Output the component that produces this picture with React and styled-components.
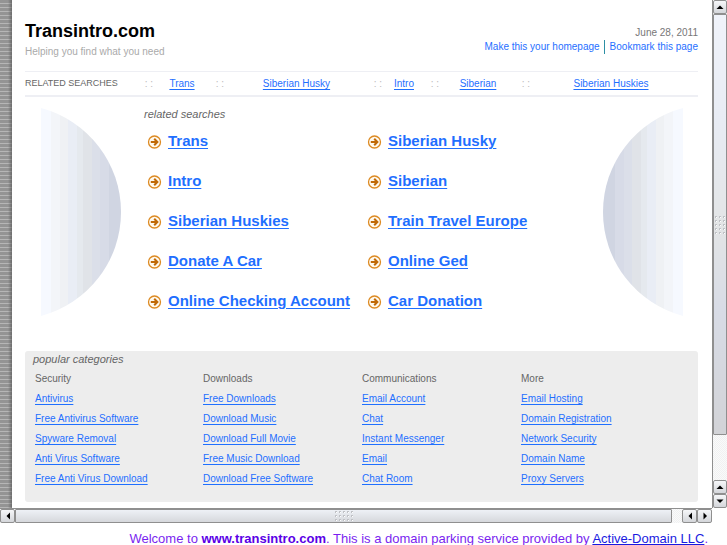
import React from 'react';
import styled, { createGlobalStyle } from 'styled-components';

const colors = {
  link: '#1f6fff',
  muted: '#777777',
  faint: '#aaaaaa',
  panel: '#ededed',
  line: '#eeeff4',
  chrome: '#8f8f8f'
};

const searches = [
  'Trans',
  'Siberian Husky',
  'Intro',
  'Siberian',
  'Siberian Huskies',
  'Train Travel Europe',
  'Donate A Car',
  'Online Ged',
  'Online Checking Account',
  'Car Donation'
];

const categories = [
  {
    title: 'Security',
    links: [
      'Antivirus',
      'Free Antivirus Software',
      'Spyware Removal',
      'Anti Virus Software',
      'Free Anti Virus Download'
    ]
  },
  {
    title: 'Downloads',
    links: [
      'Free Downloads',
      'Download Music',
      'Download Full Movie',
      'Free Music Download',
      'Download Free Software'
    ]
  },
  {
    title: 'Communications',
    links: [
      'Email Account',
      'Chat',
      'Instant Messenger',
      'Email',
      'Chat Room'
    ]
  },
  {
    title: 'More',
    links: [
      'Email Hosting',
      'Domain Registration',
      'Network Security',
      'Domain Name',
      'Proxy Servers'
    ]
  }
];

// Colour bands of the side discs, from the flat edge to the curved one.
const bands = [
  [0, 10, '#f6f9ff'],
  [10, 19, '#f3f5f9'],
  [19, 27, '#eff1f4'],
  [27, 36, '#e9edf5'],
  [36, 42, '#e5e9ee'],
  [42, 51, '#e0e3e8'],
  [51, 59, '#dbdfe9'],
  [59, 68, '#d7dbe7'],
  [68, 80, '#d0d5e2']
];

const GlobalStyle = createGlobalStyle`
  * {
    box-sizing: border-box;
  }

  body {
    margin: 0;
    overflow: hidden;
    background: #ffffff;
    font-family: 'Liberation Sans', Arial, Helvetica, sans-serif;
    font-size: 10px;
  }
`;

const Frame = styled.div`
  display: grid;
  grid-template-columns: 1fr 15px;
`;

const Page = styled.main`
  padding: 20px 14px 6px 13px;
  border-left: 12px solid transparent;
  background: linear-gradient(#ffffff, #ffffff) padding-box,
    linear-gradient(
        to right,
        transparent 0,
        transparent 8px,
        rgba(80, 80, 80, 0.6) 12px
      )
      0 0 / 12px 100% no-repeat border-box border-box,
    repeating-linear-gradient(#949494 0 3px, #b6b6b6 3px 4px) border-box;
`;

const Header = styled.header`
  display: flex;
  justify-content: space-between;
  align-items: flex-end;
  padding-bottom: 12px;
`;

const SiteName = styled.h1`
  margin: 0;
  font-size: 18px;
  line-height: 22px;
  color: #000000;
`;

const Tagline = styled.p`
  margin: 3px 0 0;
  line-height: 14px;
  color: ${colors.faint};
`;

const HeaderRight = styled.div`
  text-align: right;
  color: ${colors.muted};
  line-height: 14px;
  padding-bottom: 5px;
`;

const HeaderLinks = styled.nav`
  display: flex;
`;

const PlainLink = styled.a`
  color: ${colors.link};
  text-decoration: none;

  & + & {
    margin-left: 4px;
    padding-left: 5px;
    border-left: 1px solid #2d8fa5;
  }
`;

const Link = styled.a`
  color: ${colors.link};
  text-decoration: underline;
  text-decoration-thickness: 1px;
  text-underline-offset: 2px;
`;

const RelatedBar = styled.nav`
  display: grid;
  grid-template-columns: 115fr 13px 58fr 13px 145fr 13px 44fr 13px 78fr 13px 162fr;
  padding-right: 6px;
  border-top: 1px solid ${colors.line};
  border-bottom: 2px solid ${colors.line};
  line-height: 23px;
  text-align: center;
  white-space: nowrap;
`;

const BarLabel = styled.span`
  text-align: left;
  font-size: 9px;
  color: #666666;
`;

const Dots = styled.span`
  text-align: right;
  color: #bbbbbb;
`;

const Hero = styled.section`
  display: grid;
  grid-template-columns: 80px 1fr 80px;
  padding: 10px 15px 0 16px;
`;

const HeroBody = styled.div`
  padding-left: 23px;
`;

const SectionTitle = styled.h2`
  margin: 0;
  font-size: 11px;
  font-weight: normal;
  font-style: italic;
  line-height: 14px;
  color: #666666;
`;

const SearchList = styled.ul`
  display: grid;
  grid-template-columns: 220px 1fr;
  margin: 0;
  padding: 0 0 0 3px;
  list-style: none;
`;

const SearchItem = styled.li`
  display: flex;
  align-items: center;
  gap: 6px;
  height: 40px;
  font-size: 15px;
  font-weight: bold;
  white-space: nowrap;

  ${Link} {
    padding-bottom: 2px;
  }
`;

const Popular = styled.section`
  margin-top: 30px;
  padding: 1px 0 13px;
  border-radius: 3px;
  background: ${colors.panel};

  ${SectionTitle} {
    padding-left: 8px;
  }
`;

const CategoryGrid = styled.div`
  display: grid;
  grid-template-columns: 168fr 159fr 159fr 177fr;
  padding: 3px 0 0 10px;
`;

const CategoryTitle = styled.h3`
  margin: 0;
  font-size: 10px;
  font-weight: normal;
  line-height: 20px;
  color: #666666;
`;

const CategoryList = styled.ul`
  margin: 0;
  padding: 0;
  list-style: none;
  line-height: 20px;
`;

const ScrollTrack = styled.div`
  display: flex;
  flex-direction: ${p => (p.$vertical ? 'column' : 'row')};
  background: repeating-conic-gradient(#f0f1f2 0 25%, #fafafa 0 50%) 0 0 / 2px
    2px;
  ${p => (p.$vertical ? 'border-left' : 'border-top')}: 1px solid ${colors.chrome};
`;

const ScrollButton = styled.button`
  display: flex;
  align-items: center;
  justify-content: center;
  flex: none;
  width: ${p => (p.$vertical ? '14px' : '15px')};
  height: 14px;
  padding: 0;
  border: 1px solid ${colors.chrome};
  border-radius: 2px;
  background: linear-gradient(#f6f7f9, #d4d6da);
`;

const Thumb = styled.div`
  display: flex;
  align-items: center;
  justify-content: center;
  flex: ${p => (p.$vertical ? 421 : 657)};
  border: 1px solid ${colors.chrome};
  border-radius: 1px;
  background: ${p =>
    p.$vertical
      ? 'linear-gradient(#f0f3fa, #e8ecf4 25%, #e3e5e6 50%, #d8dce6 70%, #d2d3d7)'
      : 'linear-gradient(#eef1f6, #d6d8dc)'};
`;

const TrackGap = styled.div`
  flex: ${p => (p.$vertical ? 45 : 10)};
`;

const Footer = styled.footer`
  padding: 8px 19px 0 0;
  font-size: 13px;
  line-height: 16px;
  text-align: right;
  white-space: nowrap;
  color: #7a1ff0;

  strong {
    color: #5a00e6;
  }

  a {
    color: #1a1ae0;
  }
`;

function Disc({ flip }) {
  return (
    <svg width="80" height="210" viewBox="0 0 80 210" aria-hidden="true">
      <defs>
        <clipPath id={flip ? 'disc-right' : 'disc-left'}>
          <path d="M0 1 A107.6 107.6 0 0 1 0 209 Z" />
        </clipPath>
      </defs>
      <g transform={flip ? 'matrix(-1 0 0 1 80 0)' : undefined}>
        <g clipPath={`url(#${flip ? 'disc-right' : 'disc-left'})`}>
          {bands.map(([from, to, fill]) => (
            <rect key={from} x={from} width={to - from} height="210" fill={fill} />
          ))}
        </g>
      </g>
    </svg>
  );
}

function ArrowIcon() {
  return (
    <svg width="15" height="15" viewBox="0 0 15 15" aria-hidden="true">
      <circle cx="7.5" cy="8" r="6" fill="#fffaf0" stroke="#dd8a22" strokeWidth="1.3" />
      <path
        d="M3.8 8 H10 M7.2 4.8 L10.4 8 L7.2 11.2"
        fill="none"
        stroke="#c06a08"
        strokeWidth="2"
      />
    </svg>
  );
}

const arrowPaths = {
  up: 'M0.5 6 L4 2.5 L7.5 6 Z',
  down: 'M0.5 2.5 L4 6 L7.5 2.5 Z',
  left: 'M6 0.5 L2.5 4 L6 7.5 Z',
  right: 'M2.5 0.5 L6 4 L2.5 7.5 Z'
};

function ScrollArrow({ direction, vertical }) {
  return (
    <ScrollButton
      type="button"
      $vertical={vertical}
      aria-label={`Scroll ${direction}`}
    >
      <svg width="8" height="8" viewBox="0 0 8 8">
        <path d={arrowPaths[direction]} fill="#000000" />
      </svg>
    </ScrollButton>
  );
}

function Grip({ vertical }) {
  const cols = vertical ? 3 : 5;
  const rows = vertical ? 5 : 3;
  const cells = Array.from({ length: cols * rows }, (_, i) => i);
  return (
    <svg width={cols * 4 - 2} height={rows * 4 - 2} aria-hidden="true">
      {cells.map(i => {
        const x = (i % cols) * 4;
        const y = Math.floor(i / cols) * 4;
        return (
          <g key={i}>
            <rect x={x + 1} y={y + 1} width="1" height="1" fill="#ffffff" />
            <path d={`M${x} ${y} h2 v1 h-1 v1 h-1 Z`} fill="#bfc1c5" />
          </g>
        );
      })}
    </svg>
  );
}

function Scrollbar({ vertical }) {
  const back = vertical ? 'up' : 'left';
  const forward = vertical ? 'down' : 'right';
  return (
    <ScrollTrack $vertical={vertical}>
      <ScrollArrow direction={back} vertical={vertical} />
      <Thumb $vertical={vertical}>
        <Grip vertical={vertical} />
      </Thumb>
      <TrackGap $vertical={vertical} />
      <ScrollArrow direction={back} vertical={vertical} />
      <ScrollArrow direction={forward} vertical={vertical} />
    </ScrollTrack>
  );
}

function App() {
  return (
    <>
      <GlobalStyle />
      <Frame>
        <Page>
          <Header>
            <div>
              <SiteName>Transintro.com</SiteName>
              <Tagline>Helping you find what you need</Tagline>
            </div>
            <HeaderRight>
              June 28, 2011
              <HeaderLinks>
                <PlainLink href="#home">Make this your homepage</PlainLink>
                <PlainLink href="#bookmark">Bookmark this page</PlainLink>
              </HeaderLinks>
            </HeaderRight>
          </Header>
          <RelatedBar>
            <BarLabel>RELATED SEARCHES</BarLabel>
            {searches.slice(0, 5).map(name => (
              <React.Fragment key={name}>
                <Dots>: :</Dots>
                <span>
                  <Link href="#search">{name}</Link>
                </span>
              </React.Fragment>
            ))}
          </RelatedBar>
          <Hero>
            <Disc />
            <HeroBody>
              <SectionTitle>related searches</SectionTitle>
              <SearchList>
                {searches.map(name => (
                  <SearchItem key={name}>
                    <ArrowIcon />
                    <Link href="#search">{name}</Link>
                  </SearchItem>
                ))}
              </SearchList>
            </HeroBody>
            <Disc flip />
          </Hero>
          <Popular>
            <SectionTitle>popular categories</SectionTitle>
            <CategoryGrid>
              {categories.map(({ title, links }) => (
                <div key={title}>
                  <CategoryTitle>{title}</CategoryTitle>
                  <CategoryList>
                    {links.map(name => (
                      <li key={name}>
                        <Link href="#category">{name}</Link>
                      </li>
                    ))}
                  </CategoryList>
                </div>
              ))}
            </CategoryGrid>
          </Popular>
        </Page>
        <Scrollbar vertical />
        <Scrollbar />
      </Frame>
      <Footer>
        Welcome to <strong>www.transintro.com</strong>. This is a domain parking
        service provided by <a href="#provider">Active-Domain LLC</a>.
      </Footer>
    </>
  );
}

export default App;
